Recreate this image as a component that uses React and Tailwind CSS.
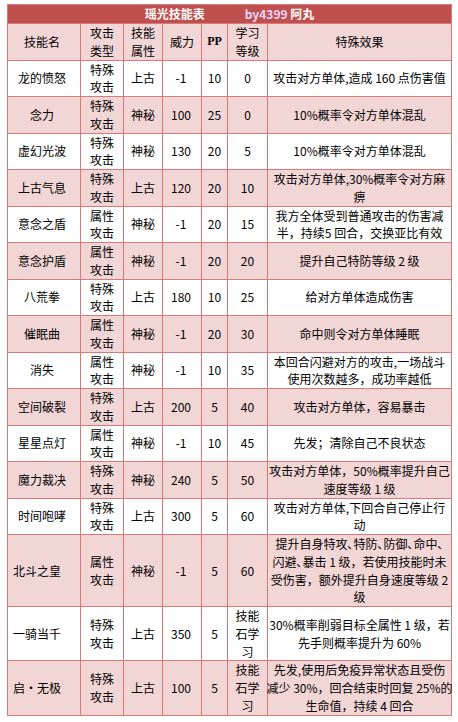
import React from 'react';

const rows = [
  { name: '龙的愤怒', type: ['特殊', '攻击'], attr: '上古', power: '-1', pp: '10', lv: ['0'], fx: ['攻击对方单体,造成 160 点伤害值'] },
  { name: '念力', type: ['特殊', '攻击'], attr: '神秘', power: '100', pp: '25', lv: ['0'], fx: ['10%概率令对方单体混乱'] },
  { name: '虚幻光波', type: ['特殊', '攻击'], attr: '神秘', power: '130', pp: '20', lv: ['5'], fx: ['10%概率令对方单体混乱'] },
  { name: '上古气息', type: ['特殊', '攻击'], attr: '上古', power: '120', pp: '20', lv: ['10'], fx: ['攻击对方单体,30%概率令对方麻', '痹'] },
  { name: '意念之盾', type: ['属性', '攻击'], attr: '神秘', power: '-1', pp: '20', lv: ['15'], fx: ['我方全体受到普通攻击的伤害减', '半，持续5 回合，交换亚比有效'] },
  { name: '意念护盾', type: ['属性', '攻击'], attr: '神秘', power: '-1', pp: '20', lv: ['20'], fx: ['提升自己特防等级 2 级'] },
  { name: '八荒拳', type: ['特殊', '攻击'], attr: '上古', power: '180', pp: '10', lv: ['25'], fx: ['给对方单体造成伤害'] },
  { name: '催眠曲', type: ['属性', '攻击'], attr: '神秘', power: '-1', pp: '20', lv: ['30'], fx: ['命中则令对方单体睡眠'] },
  { name: '消失', type: ['属性', '攻击'], attr: '神秘', power: '-1', pp: '10', lv: ['35'], fx: ['本回合闪避对方的攻击,一场战斗', '使用次数越多，成功率越低'] },
  { name: '空间破裂', type: ['特殊', '攻击'], attr: '上古', power: '200', pp: '5', lv: ['40'], fx: ['攻击对方单体，容易暴击'] },
  { name: '星星点灯', type: ['属性', '攻击'], attr: '神秘', power: '-1', pp: '10', lv: ['45'], fx: ['先发；清除自己不良状态'] },
  { name: '魔力裁决', type: ['特殊', '攻击'], attr: '神秘', power: '240', pp: '5', lv: ['50'], fx: ['攻击对方单体，50%概率提升自己', '速度等级 1 级'] },
  { name: '时间咆哮', type: ['特殊', '攻击'], attr: '上古', power: '300', pp: '5', lv: ['60'], fx: ['攻击对方单体,下回合自己停止行', '动'] },
  {
    name: '北斗之皇', left: true, type: ['属性', '攻击'], attr: '神秘', power: '-1', pp: '5', lv: ['60'],
    fx: ['提升自身特攻､特防､防御､命中､', '闪避､暴击 1 级，若使用技能时未', '受伤害，额外提升自身速度等级 2', '级'],
  },
  { name: '一骑当千', left: true, type: ['特殊', '攻击'], attr: '上古', power: '350', pp: '5', lv: ['技能', '石学', '习'], fx: ['30%概率削弱目标全属性 1 级，若', '先手则概率提升为 60%'] },
  {
    name: '启・无极', left: true, type: ['特殊', '攻击'], attr: '上古', power: '100', pp: '5', lv: ['技能', '石学', '习'],
    fx: ['先发,使用后免疫异常状态且受伤', '减少 30%，回合结束时回复 25%的', '生命值，持续 4 回合'],
  },
];

const Lines = ({ items }) => (
  <div className="flex flex-col items-center">
    {items.map((t, i) => (
      <span key={i} className="whitespace-nowrap">{t}</span>
    ))}
  </div>
);

const Cell = ({ bg, className = '', children }) => (
  <div className={`${bg} flex items-center justify-center text-center ${className}`}>{children}</div>
);

const App = () => {
  return (
    <div className="min-h-[722px] bg-white pt-[4px] pl-[7px] font-['Noto_Sans_CJK_SC',sans-serif] text-[12px] leading-[17.75px] text-black">
      <div className="grid w-[445px] grid-cols-[72px_42px_38px_38px_25px_39px_183px] gap-px bg-[#d9797a] p-px">
        <div className="col-span-7 flex h-[18px] items-center justify-center gap-[40px] bg-[#c0504d] font-bold text-white">
          <span>瑶光技能表</span>
          <span>
            <span className="text-[#e4d6fb]">by4399</span> 阿丸
          </span>
        </div>

        <Cell bg="bg-[#f2d6d6]" className="pr-1">技能名</Cell>
        <Cell bg="bg-[#f2d6d6]"><Lines items={['攻击', '类型']} /></Cell>
        <Cell bg="bg-[#f2d6d6]"><Lines items={['技能', '属性']} /></Cell>
        <Cell bg="bg-[#f2d6d6]">威力</Cell>
        <Cell bg="bg-[#f2d6d6]" className="font-['Liberation_Serif',serif] font-bold">PP</Cell>
        <Cell bg="bg-[#f2d6d6]"><Lines items={['学习', '等级']} /></Cell>
        <Cell bg="bg-[#f2d6d6]">特殊效果</Cell>

        {rows.map((r, i) => {
          const bg = i % 2 === 0 ? 'bg-white' : 'bg-[#f2d6d6]';
          return (
            <React.Fragment key={r.name}>
              <Cell bg={bg} className={r.left ? '!justify-start pl-[5px]' : 'pr-1'}>{r.name}</Cell>
              <Cell bg={bg}><Lines items={r.type} /></Cell>
              <Cell bg={bg}>{r.attr}</Cell>
              <Cell bg={bg} className="pr-[2px]">{r.power}</Cell>
              <Cell bg={bg}>{r.pp}</Cell>
              <Cell bg={bg}><Lines items={r.lv} /></Cell>
              <Cell bg={bg}><Lines items={r.fx} /></Cell>
            </React.Fragment>
          );
        })}
      </div>
    </div>
  );
};

export default App;
